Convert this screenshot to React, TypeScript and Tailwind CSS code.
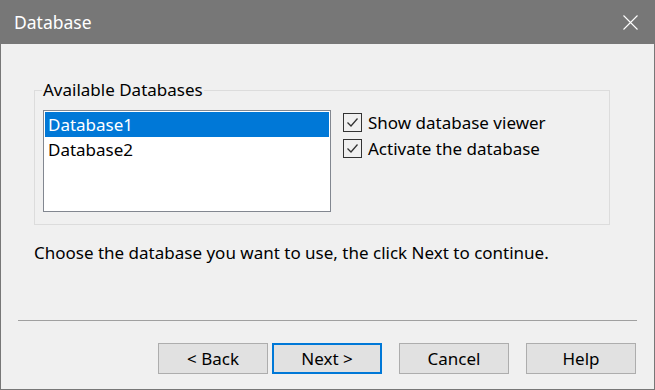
const DATABASES = ['Database1', 'Database2']

const OPTIONS = ['Show database viewer', 'Activate the database']

const BUTTONS = [
  { label: '< Back', className: 'ml-[157px]', primary: false },
  { label: 'Next >', className: 'ml-[4px]', primary: true },
  { label: 'Cancel', className: 'ml-[17px]', primary: false },
  { label: 'Help', className: 'ml-[17px]', primary: false },
]

export default function App() {
  return (
    <div
      className="w-[655px] h-[390px] flex flex-col bg-[#f0f0f0] border border-[#777777] text-[17px] text-black overflow-hidden"
      style={{ fontFamily: '"Noto Sans", "Open Sans", sans-serif' }}
    >
      {/* Title bar */}
      <div className="h-[43px] shrink-0 bg-[#777777] flex items-center justify-between pl-[13px] pr-[16px] text-white">
        <span className="text-[17.5px] leading-none">Database</span>
        <svg width="15" height="15" viewBox="0 0 15 15">
          <path d="M0.5 0.5 L14.5 14.5 M14.5 0.5 L0.5 14.5" stroke="#ffffff" strokeWidth="1.1" />
        </svg>
      </div>

      <div className="pl-[33px] pt-[35px]">
        <fieldset className="w-[576px] border border-[#dcdcdc] px-[8px] pt-[9px] pb-[12px]">
          <legend className="px-[1px] -ml-[1px] leading-[22px]">Available Databases</legend>
          <div className="flex">
            <div className="w-[288px] h-[102px] border border-[#828790] bg-white p-[1px]">
              {DATABASES.map((db, i) => (
                <div
                  key={db}
                  className={
                    'h-[25px] pl-[3px] flex items-center ' +
                    (i === 0 ? 'bg-[#0078d7] text-white' : '')
                  }
                >
                  {db}
                </div>
              ))}
            </div>
            <div className="ml-[12px] mt-[3px] flex flex-col gap-[7px]">
              {OPTIONS.map((opt) => (
                <label key={opt} className="flex items-center gap-[6px] h-[19px]">
                  <span className="w-[19px] h-[19px] border border-[#333333] bg-transparent flex items-center justify-center">
                    <svg width="15" height="15" viewBox="0 0 15 15">
                      <polyline
                        points="2.5,7.5 6,11 12.5,3.5"
                        fill="none"
                        stroke="#333333"
                        strokeWidth="1.3"
                      />
                    </svg>
                  </span>
                  <span>{opt}</span>
                </label>
              ))}
            </div>
          </div>
        </fieldset>

        <p className="mt-[17px] leading-[22px]">
          Choose the database you want to use, the click Next to continue.
        </p>
      </div>

      <div className="mt-[56px] mx-[17px] h-px bg-[#a0a0a0]" />

      <div className="flex mt-[22px]">
        {BUTTONS.map((b) => (
          <button
            key={b.label}
            className={
              'w-[110px] h-[31px] bg-[#e1e1e1] flex items-center justify-center ' +
              (b.primary ? 'border-2 border-[#0078d7] ' : 'border border-[#adadad] ') +
              b.className
            }
          >
            {b.label}
          </button>
        ))}
      </div>
    </div>
  )
}
